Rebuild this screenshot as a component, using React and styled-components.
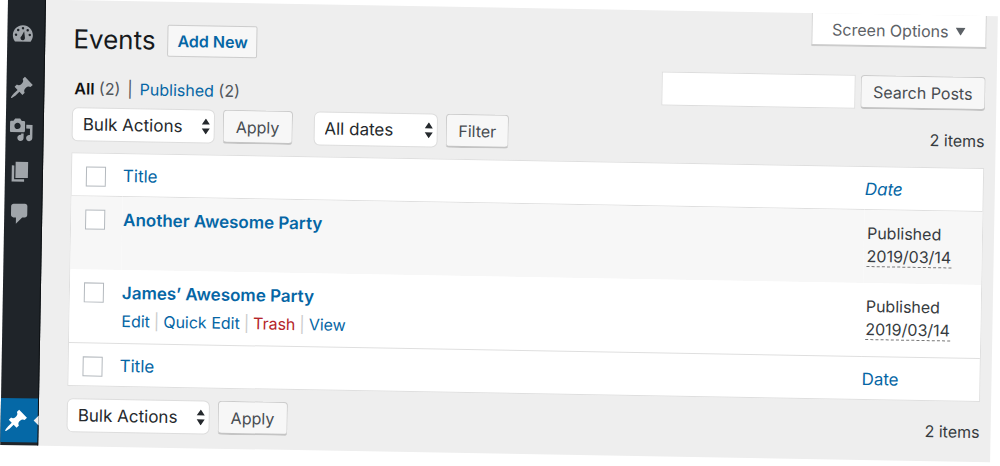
import React from "react";
import styled, { createGlobalStyle } from "styled-components";

const link = "#0566a5";
const line = "#dfdfdf";

const GlobalStyle = createGlobalStyle`
  * { box-sizing: border-box; }
  html { background: #fff; }
  body {
    display: flow-root;
    min-height: 100vh;
    margin: 0;
    background: #fff;
    color: #363b40;
    font: 16px/24px Inter, "Liberation Sans", sans-serif;
  }
  button, input, select { font: inherit; color: inherit; margin: 0; }
`;

const Sheet = styled.div`
  display: flex;
  margin: -1px 2px 0 8px;
  background: #eee;
  transform: rotate(1deg);
  transform-origin: top left;
`;

const Sidebar = styled.nav`
  display: flex;
  flex-direction: column;
  flex: none;
  width: 38px;
  padding: 12px 0 3px;
  background: #1f2429;
  border-right: 1px solid #0d1013;
`;

const MenuLink = styled.a`
  position: relative;
  display: flex;
  align-items: center;
  height: ${(p) => (p.$active ? 44 : 42)}px;
  margin-top: ${(p) => (p.$active ? "auto" : p.$spaced ? "13px" : "0")};
  padding-left: 3px;
  color: ${(p) => (p.$active ? "#fff" : "#a0a5aa")};
  background: ${(p) => (p.$active ? "#0568a6" : "transparent")};
`;

const Pointer = styled.span`
  position: absolute;
  right: -1px;
  top: 50%;
  transform: translateY(-50%);
  border: 5px solid transparent;
  border-left-width: 0;
  border-right-color: #eee;
`;

const Main = styled.main`
  flex: 1;
  min-width: 0;
  padding: 0 11px 14px 28px;
`;

const Top = styled.header`
  display: flex;
  justify-content: space-between;
`;

const Intro = styled.div`
  padding-top: 23px;
`;

const Heading = styled.div`
  display: flex;
  align-items: center;
  gap: 12px;
  height: 32px;
`;

const PageTitle = styled.h1`
  margin: 0;
  color: #16191c;
  font-size: 26px;
  line-height: 32px;
  font-weight: 400;
`;

const AddNew = styled.a`
  padding: 3px 9px;
  border: 1px solid #ccc;
  border-radius: 2px;
  background: #f7f7f7;
  color: ${link};
  font-size: 16px;
  font-weight: 600;
  text-decoration: none;
`;

const Views = styled.div`
  display: flex;
  gap: 7px;
  margin-top: 21px;
  padding-left: 2px;
  color: #50555a;
`;

const ViewLink = styled.a`
  color: ${(p) => (p.$current ? "#111" : link)};
  font-weight: ${(p) => (p.$current ? 600 : 400)};
  text-decoration: none;
`;

const Tools = styled.div`
  display: flex;
  flex-direction: column;
  align-items: flex-end;
  gap: 28px;
`;

const ScreenOptions = styled.button`
  display: flex;
  align-items: center;
  gap: 7px;
  height: 33px;
  padding: 0 20px;
  border: 1px solid #d2d2d2;
  border-top: 0;
  border-bottom: 2px solid #ccc;
  background: #fff;
  color: #5c6166;
`;

const Search = styled.form`
  display: flex;
  gap: 5px;
`;

const SearchInput = styled.input`
  width: 194px;
  height: 34px;
  border: 1px solid #ddd;
  background: #fff;
  padding: 0 6px;
`;

const Button = styled.button`
  height: 34px;
  padding: 0 12px;
  border: 1px solid #ccc;
  border-bottom: 2px solid #c4c4c4;
  border-radius: 4px;
  background: #f7f7f7;
  color: #474c51;
`;

const TableNav = styled.div`
  display: flex;
  align-items: center;
  gap: 8px;
  height: 34px;
  margin: ${(p) => (p.$bottom ? "12px 0 0" : "7px 0 11px")};
`;

const SelectBox = styled.label`
  position: relative;
  width: ${(p) => p.$width}px;
  height: 34px;

  & > svg {
    position: absolute;
    right: 4px;
    top: 9px;
    pointer-events: none;
  }
`;

const Select = styled.select`
  appearance: none;
  display: block;
  width: 100%;
  height: 100%;
  padding: 0 18px 0 10px;
  border: 1px solid #ddd;
  border-radius: 6px;
  background: #fff;
  color: #25292d;
  font-size: 17px;
`;

const Group = styled.div`
  display: flex;
  gap: 8px;
  margin-right: 13px;
`;

const Count = styled.span`
  margin-left: auto;
  padding-top: 2px;
`;

const Table = styled.table`
  width: 100%;
  table-layout: fixed;
  border: 1px solid ${line};
  border-collapse: separate;
  border-spacing: 0;
  background: #fff;
`;

const HeadCell = styled.th`
  width: ${(p) => (p.$width ? `${p.$width}px` : "auto")};
  padding: ${(p) => (p.$check ? "10px 0 8px 14px" : "10px 0 8px")};
  border-bottom: ${(p) => (p.$foot ? "0" : `1px solid ${line}`)};
  border-top: ${(p) => (p.$foot ? `1px solid ${line}` : "0")};
  text-align: left;
  font-size: 17px;
  font-weight: 400;
`;

const SortLink = styled.a`
  color: ${link};
  font-style: ${(p) => (p.$sorted ? "italic" : "normal")};
  text-decoration: none;
`;

const Row = styled.tr`
  background: ${(p) => (p.$striped ? "#f7f7f7" : "#fff")};
`;

const Cell = styled.td`
  height: 73px;
  padding: ${(p) => (p.$check ? "11px 0 10px 14px" : p.$date ? "11px 0 10px 3px" : "11px 0 10px 1px")};
  vertical-align: top;
`;

const Check = styled.input`
  appearance: none;
  display: block;
  width: 20px;
  height: 20px;
  margin: 2px 0 0;
  border: 1px solid #b4b9be;
  background: #fff;
`;

const RowTitle = styled.a`
  color: ${link};
  font-size: 17px;
  font-weight: 600;
  text-decoration: none;
`;

const Actions = styled.div`
  display: flex;
  gap: 4px;
  margin-top: 4px;
  color: #ccc;
`;

const Action = styled.a`
  color: ${(p) => (p.$danger ? "#b5252a" : link)};
  text-decoration: none;
`;

const DateText = styled.abbr`
  display: table;
  line-height: 20px;
  margin-top: 1px;
  border-bottom: 1px dashed #777;
  text-decoration: none;
`;

const icons = {
  Dashboard: (
    <path
      fillRule="evenodd"
      d="M3.76 17h12.48c1.1-1.37 1.76-3.11 1.76-5 0-4.42-3.58-8-8-8s-8 3.58-8 8c0 1.89.66 3.63 1.76 5z
      M10 5.3a1 1 0 1 1 0 2a1 1 0 1 1 0-2z
      M6.2 6.9a1 1 0 1 1 0 2a1 1 0 1 1 0-2z
      M13.8 6.9a1 1 0 1 1 0 2a1 1 0 1 1 0-2z
      M4.5 10.6a1 1 0 1 1 0 2a1 1 0 1 1 0-2z
      M15.5 10.6a1 1 0 1 1 0 2a1 1 0 1 1 0-2z
      M11 8.7l.7 5.2a1.8 1.8 0 1 1-2.7-1.2z"
    />
  ),
  Pin: (
    <path d="M10.44 3.02l1.82-1.82 6.36 6.35-1.83 1.82c-1.05-.68-2.48-.57-3.41.36l-.75.75c-.92.93-1.04 2.35-.35 3.41l-1.83 1.82-2.41-2.41-2.8 2.79c-.42.42-3.38 2.71-3.8 2.29s1.86-3.39 2.28-3.81l2.79-2.79L4.1 9.36l1.83-1.82c1.05.69 2.48.57 3.4-.36l.75-.75c.93-.92 1.05-2.35.36-3.41z" />
  ),
  Media: (
    <path
      fillRule="evenodd"
      d="M13 11V4c0-.55-.45-1-1-1h-1.67L9 1H5L3.67 3H2c-.55 0-1 .45-1 1v7c0 .55.45 1 1 1h10c.55 0 1-.45 1-1zM7 4.5c1.38 0 2.5 1.12 2.5 2.5S8.38 9.5 7 9.5 4.5 8.38 4.5 7 5.62 4.5 7 4.5zM14 6h5v10.5c0 1.38-1.12 2.5-2.5 2.5S14 17.88 14 16.5s1.12-2.5 2.5-2.5c.17 0 .34.02.5.05V9h-3V6zm-4 8.05V13h2v3.5c0 1.38-1.12 2.5-2.5 2.5S7 17.88 7 16.5 8.12 14 9.5 14c.17 0 .34.02.5.05z"
    />
  ),
  Pages: <path d="M6 15V2h10v13H6zm-1 1h8v2H3V5h2v11z" />,
  Comments: (
    <path d="M5 2h9c1.1 0 2 .9 2 2v7c0 1.1-.9 2-2 2h-2l-5 5v-5H5c-1.1 0-2-.9-2-2V4c0-1.1.9-2 2-2z" />
  ),
};

function MenuItem({ icon, label, spaced, active }) {
  return (
    <MenuLink href="#" aria-label={label} $spaced={spaced} $active={active}>
      <svg width="25" height="25" viewBox="0 0 20 20" fill="currentColor" aria-hidden="true">
        {icons[icon]}
      </svg>
      {active && <Pointer />}
    </MenuLink>
  );
}

function Dropdown({ label, option, width }) {
  return (
    <SelectBox $width={width}>
      <Select aria-label={label}>
        <option>{option}</option>
      </Select>
      <svg width="10" height="16" viewBox="0 0 10 16" fill="#25292d" aria-hidden="true">
        <path d="M5 0l4 6H1zM5 16l4-6H1z" />
      </svg>
    </SelectBox>
  );
}

function ColumnHeads({ foot }) {
  return (
    <tr>
      <HeadCell $width={51} $check $foot={foot}>
        <Check type="checkbox" aria-label="Select all" />
      </HeadCell>
      <HeadCell $foot={foot}>
        <SortLink href="#">Title</SortLink>
      </HeadCell>
      <HeadCell $width={118} $foot={foot}>
        <SortLink href="#" $sorted={!foot}>Date</SortLink>
      </HeadCell>
    </tr>
  );
}

function EventRow({ title, striped, actions }) {
  return (
    <Row $striped={striped}>
      <Cell $check>
        <Check type="checkbox" aria-label={`Select ${title}`} />
      </Cell>
      <Cell>
        <RowTitle href="#">{title}</RowTitle>
        {actions && (
          <Actions>
            <Action href="#">Edit</Action>|<Action href="#">Quick Edit</Action>|
            <Action href="#" $danger>Trash</Action>|<Action href="#">View</Action>
          </Actions>
        )}
      </Cell>
      <Cell $date>
        Published
        <DateText>2019/03/14</DateText>
      </Cell>
    </Row>
  );
}

export default function App() {
  return (
    <>
      <GlobalStyle />
      <Sheet>
        <Sidebar>
          <MenuItem icon="Dashboard" label="Dashboard" />
          <MenuItem icon="Pin" label="Posts" spaced />
          <MenuItem icon="Media" label="Media" />
          <MenuItem icon="Pages" label="Pages" />
          <MenuItem icon="Comments" label="Comments" />
          <MenuItem icon="Pin" label="Events" active />
        </Sidebar>
        <Main>
          <Top>
            <Intro>
              <Heading>
                <PageTitle>Events</PageTitle>
                <AddNew href="#">Add New</AddNew>
              </Heading>
              <Views>
                <span><ViewLink href="#" $current>All</ViewLink> (2)</span>
                <span>|</span>
                <span><ViewLink href="#">Published</ViewLink> (2)</span>
              </Views>
            </Intro>
            <Tools>
              <ScreenOptions type="button">
                Screen Options
                <svg width="10" height="8" viewBox="0 0 10 8" fill="currentColor" aria-hidden="true">
                  <path d="M0 0h10L5 8z" />
                </svg>
              </ScreenOptions>
              <Search onSubmit={(e) => e.preventDefault()}>
                <SearchInput type="search" aria-label="Search Posts" />
                <Button>Search Posts</Button>
              </Search>
            </Tools>
          </Top>
          <TableNav>
            <Group>
              <Dropdown label="Select bulk action" option="Bulk Actions" width={143} />
              <Button type="button">Apply</Button>
            </Group>
            <Group>
              <Dropdown label="Filter by date" option="All dates" width={124} />
              <Button type="button">Filter</Button>
            </Group>
            <Count>2 items</Count>
          </TableNav>
          <Table>
            <thead><ColumnHeads /></thead>
            <tbody>
              <EventRow title="Another Awesome Party" striped />
              <EventRow title="James’ Awesome Party" actions />
            </tbody>
            <tfoot><ColumnHeads foot /></tfoot>
          </Table>
          <TableNav $bottom>
            <Group>
              <Dropdown label="Select bulk action" option="Bulk Actions" width={143} />
              <Button type="button">Apply</Button>
            </Group>
            <Count>2 items</Count>
          </TableNav>
        </Main>
      </Sheet>
    </>
  );
}
